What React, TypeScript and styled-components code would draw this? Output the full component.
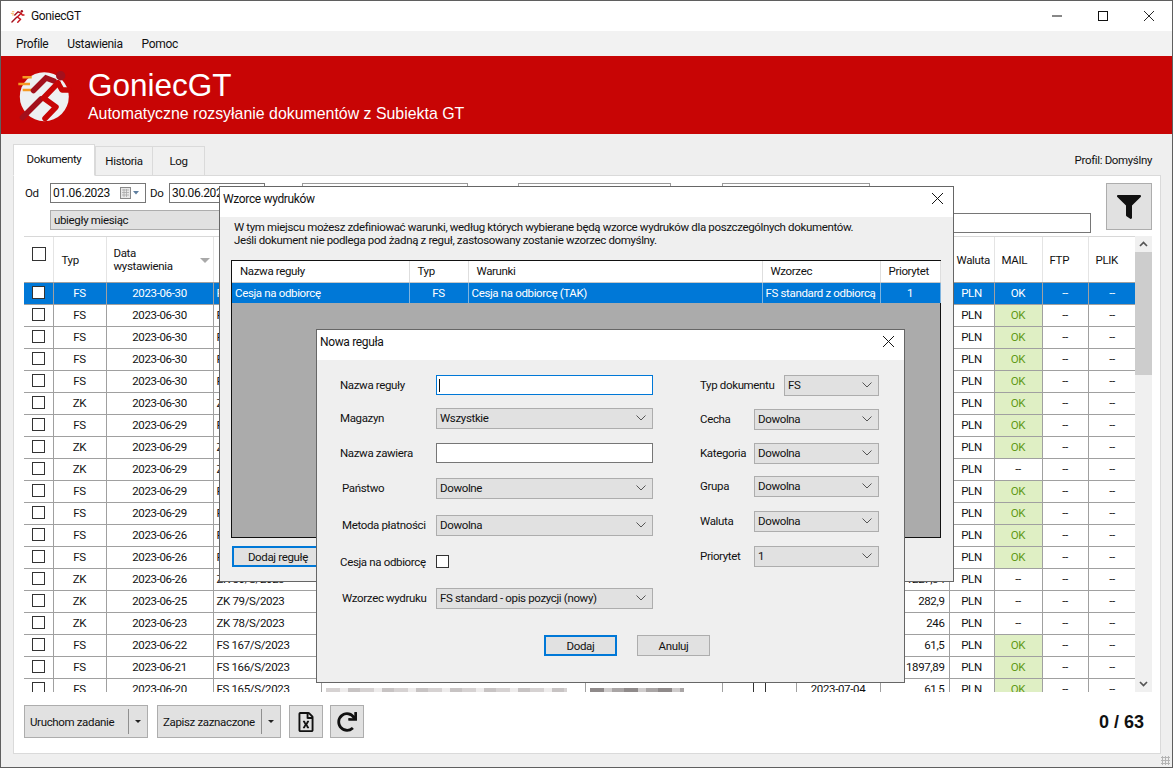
import React from 'react';
import styled, { createGlobalStyle } from 'styled-components';
import { FaFilter, FaRedo, FaRegFileExcel } from 'react-icons/fa';

/* ───────────── data ───────────── */

type Row = { typ: string; date: string; no: string; amount: string; mail: boolean };

const rows: Row[] = [
	{ typ: 'FS', date: '2023-06-30', no: 'FS 174/S/2023', amount: '', mail: true },
	{ typ: 'FS', date: '2023-06-30', no: 'FS 173/S/2023', amount: '', mail: true },
	{ typ: 'FS', date: '2023-06-30', no: 'FS 172/S/2023', amount: '', mail: true },
	{ typ: 'FS', date: '2023-06-30', no: 'FS 171/S/2023', amount: '', mail: true },
	{ typ: 'FS', date: '2023-06-30', no: 'FS 170/S/2023', amount: '', mail: true },
	{ typ: 'ZK', date: '2023-06-30', no: 'ZK 83/S/2023', amount: '', mail: true },
	{ typ: 'FS', date: '2023-06-29', no: 'FS 169/S/2023', amount: '', mail: true },
	{ typ: 'ZK', date: '2023-06-29', no: 'ZK 82/S/2023', amount: '', mail: true },
	{ typ: 'ZK', date: '2023-06-29', no: 'ZK 81/S/2023', amount: '', mail: false },
	{ typ: 'FS', date: '2023-06-29', no: 'FS 168/S/2023', amount: '', mail: true },
	{ typ: 'FS', date: '2023-06-29', no: 'FS 168/S/2023', amount: '', mail: true },
	{ typ: 'FS', date: '2023-06-26', no: 'FS 168/S/2023', amount: '', mail: true },
	{ typ: 'FS', date: '2023-06-26', no: 'FS 168/S/2023', amount: '', mail: true },
	{ typ: 'ZK', date: '2023-06-26', no: 'ZK 80/S/2023', amount: '1227,34', mail: false },
	{ typ: 'ZK', date: '2023-06-25', no: 'ZK 79/S/2023', amount: '282,9', mail: false },
	{ typ: 'ZK', date: '2023-06-23', no: 'ZK 78/S/2023', amount: '246', mail: false },
	{ typ: 'FS', date: '2023-06-22', no: 'FS 167/S/2023', amount: '61,5', mail: true },
	{ typ: 'FS', date: '2023-06-21', no: 'FS 166/S/2023', amount: '1897,89', mail: true },
	{ typ: 'FS', date: '2023-06-20', no: 'FS 165/S/2023', amount: '61,5', mail: true },
];

const colWidths = [29, 53, 107, 108, 264, 137, 74, 84, 69, 45, 48, 46, 48];

/* ───────────── window chrome ───────────── */

const Global = createGlobalStyle`
	html, body {
		margin: 0;
		padding: 0;
		height: 100%;
		overflow: hidden;
		background: #efefef;
	}
	* { box-sizing: border-box; }
	body {
		font-family: Roboto, "Liberation Sans", sans-serif;
		font-size: 11.5px;
		letter-spacing: -0.35px;
		color: #111;
	}
`;

const Win = styled.div`
	position: relative;
	width: 1173px;
	height: 768px;
	display: flex;
	flex-direction: column;
	background: #efefef;
	border: 1px solid #5f5f5f;
	overflow: hidden;
`;

const TitleBar = styled.div`
	height: 30px;
	flex: none;
	display: flex;
	align-items: center;
	padding-left: 9px;
	gap: 6px;
	background: #fff;
	font-size: 12px;
`;

const WinButtons = styled.div`
	margin-left: auto;
	display: flex;
	height: 100%;
`;

const WinButton = styled.div`
	width: 46px;
	display: flex;
	align-items: center;
	justify-content: center;
`;

const MenuBar = styled.div`
	height: 25px;
	flex: none;
	display: flex;
	align-items: center;
	gap: 19px;
	padding-left: 15px;
	background: #f2f2f2;
	font-size: 12px;
`;

const Banner = styled.div`
	height: 78px;
	flex: none;
	display: flex;
	align-items: center;
	padding-left: 17px;
	background: #c80505;
	color: #fff;
`;

const BannerText = styled.div`
	margin-left: 22px;
	padding-bottom: 2px;
	display: flex;
	flex-direction: column;
	font-family: "Liberation Sans", Arial, sans-serif;
	letter-spacing: 0;
`;

const BannerTitle = styled.div`
	font-size: 31.5px;
	line-height: 38px;
`;

const BannerSub = styled.div`
	font-size: 15.9px;
	line-height: 19px;
`;

/* ───────────── tabs ───────────── */

const Content = styled.div`
	flex: 1;
	display: flex;
	flex-direction: column;
	padding: 10px 11px 13px 12px;
	min-height: 0;
`;

const TabRow = styled.div`
	height: 32px;
	flex: none;
	display: flex;
	align-items: flex-end;
	position: relative;
	z-index: 1;
	margin-bottom: -1px;
`;

const Tab = styled.div<{ $active?: boolean; $w: number }>`
	width: ${({ $w }) => $w}px;
	height: ${({ $active }) => ($active ? 32 : 30)}px;
	display: flex;
	align-items: center;
	justify-content: center;
	padding-bottom: ${({ $active }) => ($active ? 3 : 0)}px;
	background: ${({ $active }) => ($active ? '#fff' : '#f0f0f0')};
	border: 1px solid #dadada;
	border-bottom: ${({ $active }) => ($active ? '1px solid #fff' : '1px solid #dadada')};
	margin-right: ${({ $active }) => ($active ? 0 : -1)}px;
`;

const ProfileLabel = styled.div`
	margin-left: auto;
	align-self: flex-start;
	padding: 9px 9px 0 0;
`;

const Panel = styled.div`
	flex: 1;
	display: flex;
	flex-direction: column;
	padding: 7px 8px 0 10px;
	background: #fff;
	border: 1px solid #dadada;
	min-height: 0;
`;

/* ───────────── filters ───────────── */

const FilterArea = styled.div`
	display: flex;
	height: 47px;
	flex: none;
	margin-bottom: 6px;
`;

const FilterRows = styled.div`
	flex: 1;
	display: flex;
	flex-direction: column;
`;

const FilterTop = styled.div`
	display: flex;
	align-items: center;
	height: 20px;
`;

const FilterLabel = styled.span<{ $w: number; $pl: number }>`
	width: ${({ $w }) => $w}px;
	padding-left: ${({ $pl }) => $pl}px;
`;

const DateBox = styled.div`
	width: 96px;
	height: 20px;
	padding: 0 6px 0 2px;
	display: flex;
	align-items: center;
	justify-content: space-between;
	border: 1px solid #767676;
	background: #fff;
	font-size: 12px;
`;

const GreyBox = styled.div<{ $ml: number; $w: number }>`
	width: ${({ $w }) => $w}px;
	margin-left: ${({ $ml }) => $ml}px;
	height: 20px;
	border: 1px solid #9a9a9a;
	background: #fff;
`;

const FilterBottom = styled.div`
	display: flex;
	align-items: flex-start;
	margin-top: 7px;
	padding-left: 26px;
	padding-right: 15px;
`;

const PresetCombo = styled.div`
	width: 300px;
	height: 20px;
	padding-left: 3px;
	display: flex;
	align-items: center;
	background: #e1e1e1;
	border: 1px solid #adadad;
`;

const SearchInput = styled.div`
	margin-left: auto;
	margin-top: 3px;
	width: 138px;
	height: 20px;
	background: #fff;
	border: 1px solid #767676;
`;

const FilterButton = styled.div`
	width: 46px;
	height: 47px;
	display: flex;
	align-items: center;
	justify-content: center;
	background: #e1e1e1;
	border: 1px solid #adadad;
`;

/* ───────────── table ───────────── */

const TableArea = styled.div`
	display: flex;
	height: 456px;
	flex: none;
`;

const TableClip = styled.div`
	width: 1112px;
	height: 456px;
	overflow: hidden;
	border-top: 1px solid #d8d8d8;
`;

const Grid = styled.table`
	width: 1112px;
	table-layout: fixed;
	border-collapse: collapse;
	font-size: 11.5px;
`;

const Th = styled.th<{ $pl?: number }>`
	height: 45px;
	padding: 2px 0 0 ${({ $pl }) => $pl ?? 7}px;
	text-align: left;
	font-weight: 400;
	line-height: 13px;
	border-right: 1px solid #e4e4e4;
	border-bottom: 1px solid #a0a0a0;
	background: #fff;
	white-space: nowrap;
`;

const ThInner = styled.div`
	display: flex;
	align-items: center;
	justify-content: space-between;
	padding-right: 3px;
`;

const SortArrow = styled.span`
	width: 0;
	height: 0;
	border-left: 5px solid transparent;
	border-right: 5px solid transparent;
	border-top: 5px solid #a9a9a9;
`;

const Tr = styled.tr<{ $sel?: boolean }>`
	height: 22px;
	background: ${({ $sel }) => ($sel ? '#0078d7' : '#fff')};
	color: ${({ $sel }) => ($sel ? '#fff' : '#111')};
`;

const Td = styled.td<{ $align?: string }>`
	padding: 0 4px 0 ${({ $align }) => ($align === 'left' ? 3 : 4)}px;
	border-right: 1px solid #a0a0a0;
	border-bottom: 1px solid #a0a0a0;
	text-align: ${({ $align }) => $align || 'center'};
	white-space: nowrap;
	overflow: hidden;
`;

const StatusTd = styled(Td)<{ $ok: boolean }>`
	background: ${({ $ok }) => ($ok ? '#dfefc4' : 'transparent')};
	color: ${({ $ok }) => ($ok ? '#5f9a17' : 'inherit')};
`;

const Blur = styled.div<{ $dark?: boolean }>`
	height: 8px;
	margin-top: 6px;
	margin-right: ${({ $dark }) => ($dark ? 34 : 14)}px;
	background: repeating-linear-gradient(
		90deg,
		${({ $dark }) => ($dark ? '#8f8a8a' : '#d6d2d2')} 0 14px,
		${({ $dark }) => ($dark ? '#cfcccc' : '#eeecec')} 14px 22px,
		${({ $dark }) => ($dark ? '#a9a5a5' : '#c7c3c3')} 22px 34px
	);
`;

const Check = styled.span`
	display: inline-block;
	width: 13px;
	height: 13px;
	margin-bottom: 2px;
	vertical-align: middle;
	background: #fff;
	border: 1px solid #333;
`;

const HeadCheck = styled(Check)`
	width: 14px;
	height: 14px;
	margin-bottom: 12px;
`;

const Scrollbar = styled.div`
	width: 17px;
	height: 456px;
	display: flex;
	flex-direction: column;
	background: #f0f0f0;
`;

const ScrollArrow = styled.div`
	height: 16px;
	flex: none;
	display: flex;
	align-items: center;
	justify-content: center;
`;

const ScrollThumb = styled.div`
	height: 123px;
	flex: none;
	background: #cdcdcd;
`;

const ScrollTrack = styled.div`
	flex: 1;
`;

/* ───────────── bottom bar ───────────── */

const BottomBar = styled.div`
	flex: 1;
	display: flex;
	align-items: flex-start;
	padding-top: 13px;
`;

const SplitButton = styled.div<{ $ml?: number }>`
	width: 124px;
	height: 33px;
	margin-left: ${({ $ml }) => $ml || 0}px;
	display: flex;
	align-items: center;
	background: #e1e1e1;
	border: 1px solid #adadad;
`;

const SplitLabel = styled.div`
	flex: 1;
	padding-left: 5px;
	white-space: nowrap;
`;

const SplitArrow = styled.div`
	width: 19px;
	height: 25px;
	display: flex;
	align-items: center;
	justify-content: center;
	border-left: 1px solid #8f8f8f;
	&::after {
		content: '';
		border-left: 3px solid transparent;
		border-right: 3px solid transparent;
		border-top: 3px solid #222;
	}
`;

const IconButton = styled.div<{ $ml: number }>`
	width: 34px;
	height: 33px;
	margin-left: ${({ $ml }) => $ml}px;
	display: flex;
	align-items: center;
	justify-content: center;
	background: #e1e1e1;
	border: 1px solid #adadad;
`;

const Counter = styled.div`
	margin-left: auto;
	margin-right: 8px;
	margin-top: 7px;
	font-family: "Liberation Sans", Arial, sans-serif;
	font-size: 18px;
	font-weight: 700;
	letter-spacing: 0;
`;

const Grip = styled.div`
	position: absolute;
	right: 2px;
	bottom: 2px;
	width: 9px;
	height: 9px;
	background: radial-gradient(#b5b5b5 1px, transparent 1.2px) 0 0 / 3px 3px;
`;

/* ───────────── dialogs ───────────── */

const Dialog = styled.div<{ $x: number; $y: number; $w: number; $h: number }>`
	position: absolute;
	left: ${({ $x }) => $x}px;
	top: ${({ $y }) => $y}px;
	width: ${({ $w }) => $w}px;
	height: ${({ $h }) => $h}px;
	display: flex;
	flex-direction: column;
	background: #efefef;
	border: 1px solid #666;
`;

const DialogTitle = styled.div`
	height: 30px;
	flex: none;
	padding: 0 10px 7px 3px;
	display: flex;
	align-items: center;
	justify-content: space-between;
	background: #fff;
	font-size: 12px;
`;

const DialogNote = styled.div`
	padding: 4px 0 0 14px;
	height: 43px;
	line-height: 13px;
	white-space: nowrap;
`;

const RuleList = styled.div`
	margin-left: 11px;
	width: 710px;
	height: 278px;
	background: #ababab;
	border: 1px solid #111;
`;

const RuleTable = styled.table`
	width: 708px;
	table-layout: fixed;
	border-collapse: collapse;
`;

const RuleTh = styled.th`
	height: 21px;
	padding: 0 0 0 8px;
	text-align: left;
	font-weight: 400;
	background: #fff;
	border-right: 1px solid #dedede;
	border-bottom: 1px solid #c8c8c8;
`;

const RuleTd = styled.td<{ $center?: boolean }>`
	height: 21px;
	padding: 0 3px;
	color: #fff;
	background: #0078d7;
	border-right: 1px solid #7fb4df;
	text-align: ${({ $center }) => ($center ? 'center' : 'left')};
	white-space: nowrap;
	overflow: hidden;
`;

const FormButton = styled.div<{ $focus?: boolean; $w: number }>`
	width: ${({ $w }) => $w}px;
	height: 21px;
	display: flex;
	align-items: center;
	justify-content: center;
	background: #e1e1e1;
	border: ${({ $focus }) => ($focus ? '2px solid #0078d7' : '1px solid #adadad')};
`;

const AddRuleRow = styled.div`
	padding: 8px 0 0 12px;
`;

const FormBody = styled.div`
	flex: 1;
	display: flex;
	padding: 15px 25px 0 23px;
`;

const FormCol = styled.div<{ $w: number; $ml?: number }>`
	width: ${({ $w }) => $w}px;
	margin-left: ${({ $ml }) => $ml || 0}px;
	display: flex;
	flex-direction: column;
`;

const Field = styled.div<{ $mt?: number }>`
	height: 20px;
	margin-top: ${({ $mt }) => $mt || 0}px;
	display: flex;
	align-items: center;
	justify-content: space-between;
	flex: none;
`;

const FieldLabel = styled.span<{ $ml?: number }>`
	margin-left: ${({ $ml }) => $ml || 0}px;
	white-space: nowrap;
`;

const Combo = styled.div<{ $w: number }>`
	width: ${({ $w }) => $w}px;
	height: 21px;
	padding: 0 6px 0 3px;
	display: flex;
	align-items: center;
	justify-content: space-between;
	background: #e1e1e1;
	border: 1px solid #adadad;
`;

const TextBox = styled.div<{ $focus?: boolean }>`
	width: 217px;
	height: 20px;
	padding-left: 2px;
	display: flex;
	align-items: center;
	background: #fff;
	border: 1px solid ${({ $focus }) => ($focus ? '#0078d7' : '#767676')};
`;

const Caret = styled.span`
	width: 1px;
	height: 13px;
	background: #111;
`;

const CheckSlot = styled.div`
	width: 217px;
`;

const FormActions = styled.div`
	height: 47px;
	flex: none;
	display: flex;
	justify-content: flex-start;
	gap: 20px;
	padding-left: 227px;
`;

/* ───────────── drawings ───────────── */

const LogoSvg = styled.svg`
	margin: 0 -14px 0 -8px;
`;

const Runner = ({ color = '#c80505', dark = '#a3101c' }: { color?: string; dark?: string }) => (
	<>
		<g stroke="#f59a23" strokeWidth="2.6">
			<path d="M12.5 17.3H21.7M8.3 24H20M12.7 30H21.7" />
		</g>
		<circle cx="50.7" cy="15.7" r="4.7" fill={dark} />
		<g fill="none" stroke={dark} strokeWidth="5.5" strokeLinecap="round">
			<path d="M12.5 57.5 31 39" />
			<path d="M23.5 30.5 36 18l8 3" />
		</g>
		<g fill="none" stroke={color} strokeWidth="5.5" strokeLinejoin="round" strokeLinecap="round">
			<path d="M48 23 33.5 38 46 47 35 58.5" />
			<path d="M48 23l4 7h7" />
		</g>
	</>
);

const Logo = () => (
	<LogoSvg width="70" height="70" viewBox="0 0 70 70">
		<circle cx="34.3" cy="36.7" r="24.5" fill="#eef0f2" />
		<Runner />
	</LogoSvg>
);

const SmallLogo = () => (
	<svg width="15" height="15" viewBox="5 8 58 56">
		<Runner color="#c8141c" dark="#a3101c" />
	</svg>
);

const CalendarIcon = () => (
	<svg width="19" height="12" viewBox="0 0 19 12">
		<rect x="0.5" y="0.5" width="10" height="11" fill="#e8e8e8" stroke="#8a8a8a" />
		<path d="M2 3h7M2 5.5h7M2 8h7M4 2v8M6.5 2v8" stroke="#a8a8a8" strokeWidth="0.8" />
		<path d="M13 4h6l-3 3.5z" fill="#5f7f9f" />
	</svg>
);

const Chevron = () => (
	<svg width="10" height="6" viewBox="0 0 10 6">
		<path d="M.5.5 5 5 9.5.5" fill="none" stroke="#555" strokeWidth="1" />
	</svg>
);

const CloseX = ({ size = 10 }: { size?: number }) => (
	<svg width={size} height={size} viewBox="0 0 10 10">
		<path d="M0 0 10 10M10 0 0 10" stroke="#111" strokeWidth="0.9" />
	</svg>
);

const ScrollChevron = ({ up }: { up?: boolean }) => (
	<svg width="9" height="6" viewBox="0 0 9 6">
		<path d={up ? 'M1 5 4.5 1.5 8 5' : 'M1 1 4.5 4.5 8 1'} fill="none" stroke="#555" strokeWidth="1.7" />
	</svg>
);

/* ───────────── component ───────────── */

export default function App() {
	return (
		<Win>
			<Global />
			<TitleBar>
				<SmallLogo />
				GoniecGT
				<WinButtons>
					<WinButton>
						<svg width="10" height="10" viewBox="0 0 10 10"><path d="M0 5h10" stroke="#111" /></svg>
					</WinButton>
					<WinButton>
						<svg width="10" height="10" viewBox="0 0 10 10"><rect x=".5" y=".5" width="9" height="9" fill="none" stroke="#111" /></svg>
					</WinButton>
					<WinButton><CloseX /></WinButton>
				</WinButtons>
			</TitleBar>
			<MenuBar>
				<span>Profile</span>
				<span>Ustawienia</span>
				<span>Pomoc</span>
			</MenuBar>
			<Banner>
				<Logo />
				<BannerText>
					<BannerTitle>GoniecGT</BannerTitle>
					<BannerSub>Automatyczne rozsyłanie dokumentów z Subiekta GT</BannerSub>
				</BannerText>
			</Banner>

			<Content>
				<TabRow>
					<Tab $active $w={82}>Dokumenty</Tab>
					<Tab $w={58}>Historia</Tab>
					<Tab $w={53}>Log</Tab>
					<ProfileLabel>Profil: Domyślny</ProfileLabel>
				</TabRow>
				<Panel>
					<FilterArea>
						<FilterRows>
							<FilterTop>
								<FilterLabel $w={26} $pl={1}>Od</FilterLabel>
								<DateBox>01.06.2023<CalendarIcon /></DateBox>
								<FilterLabel $w={23} $pl={4}>Do</FilterLabel>
								<DateBox>30.06.2023<CalendarIcon /></DateBox>
								<GreyBox $ml={37} $w={166} />
								<GreyBox $ml={50} $w={153} />
								<GreyBox $ml={51} $w={148} />
							</FilterTop>
							<FilterBottom>
								<PresetCombo>ubiegły miesiąc</PresetCombo>
								<SearchInput />
							</FilterBottom>
						</FilterRows>
						<FilterButton><FaFilter size={24} color="#111" /></FilterButton>
					</FilterArea>

					<TableArea>
						<TableClip>
							<Grid>
								<colgroup>
									{colWidths.map((w, i) => <col key={i} width={w} />)}
								</colgroup>
								<thead>
									<tr>
										<Th $pl={8}><HeadCheck /></Th>
										<Th $pl={8}>Typ</Th>
										<Th>
											<ThInner>
												<span>Data<br />wystawienia</span>
												<SortArrow />
											</ThInner>
										</Th>
										<Th />
										<Th />
										<Th />
										<Th />
										<Th />
										<Th />
										<Th>Waluta</Th>
										<Th>MAIL</Th>
										<Th>FTP</Th>
										<Th>PLIK</Th>
									</tr>
								</thead>
								<tbody>
									{rows.map((r, i) => (
										<Tr key={i} $sel={i === 0}>
											<Td><Check /></Td>
											<Td>{r.typ}</Td>
											<Td>{r.date}</Td>
											<Td $align="left">{r.no}</Td>
											<Td><Blur /></Td>
											<Td><Blur $dark /></Td>
											<Td><Check /></Td>
											<Td>2023-07-04</Td>
											<Td $align="right">{r.amount}</Td>
											<Td>PLN</Td>
											<StatusTd $ok={r.mail && i > 0}>{r.mail ? 'OK' : '--'}</StatusTd>
											<Td>--</Td>
											<Td>--</Td>
										</Tr>
									))}
								</tbody>
							</Grid>
						</TableClip>
						<Scrollbar>
							<ScrollArrow><ScrollChevron up /></ScrollArrow>
							<ScrollThumb />
							<ScrollTrack />
							<ScrollArrow><ScrollChevron /></ScrollArrow>
						</Scrollbar>
					</TableArea>

					<BottomBar>
						<SplitButton>
							<SplitLabel>Uruchom zadanie</SplitLabel>
							<SplitArrow />
						</SplitButton>
						<SplitButton $ml={9}>
							<SplitLabel>Zapisz zaznaczone</SplitLabel>
							<SplitArrow />
						</SplitButton>
						<IconButton $ml={8}><FaRegFileExcel size={20} color="#111" /></IconButton>
						<IconButton $ml={7}><FaRedo size={20} color="#111" /></IconButton>
						<Counter>0 / 63</Counter>
					</BottomBar>
				</Panel>
			</Content>
			<Grip />

			<Dialog $x={218} $y={185} $w={735} $h={396}>
				<DialogTitle>Wzorce wydruków<CloseX size={11} /></DialogTitle>
				<DialogNote>
					W tym miejscu możesz zdefiniować warunki, według których wybierane będą wzorce wydruków dla poszczególnych dokumentów.<br />
					Jeśli dokument nie podlega pod żadną z reguł, zastosowany zostanie wzorzec domyślny.
				</DialogNote>
				<RuleList>
					<RuleTable>
						<colgroup>
							<col width={177} />
							<col width={59} />
							<col width={294} />
							<col width={118} />
							<col width={60} />
						</colgroup>
						<thead>
							<tr>
								<RuleTh>Nazwa reguły</RuleTh>
								<RuleTh>Typ</RuleTh>
								<RuleTh>Warunki</RuleTh>
								<RuleTh>Wzorzec</RuleTh>
								<RuleTh>Priorytet</RuleTh>
							</tr>
						</thead>
						<tbody>
							<tr>
								<RuleTd>Cesja na odbiorcę</RuleTd>
								<RuleTd $center>FS</RuleTd>
								<RuleTd>Cesja na odbiorcę (TAK)</RuleTd>
								<RuleTd>FS standard z odbiorcą</RuleTd>
								<RuleTd $center>1</RuleTd>
							</tr>
						</tbody>
					</RuleTable>
				</RuleList>
				<AddRuleRow><FormButton $focus $w={92}>Dodaj regułę</FormButton></AddRuleRow>
			</Dialog>

			<Dialog $x={315} $y={328} $w={589} $h={354}>
				<DialogTitle>Nowa reguła<CloseX size={11} /></DialogTitle>
				<FormBody>
					<FormCol $w={313}>
						<Field>
							<FieldLabel>Nazwa reguły</FieldLabel>
							<TextBox $focus><Caret /></TextBox>
						</Field>
						<Field $mt={13}>
							<FieldLabel>Magazyn</FieldLabel>
							<Combo $w={217}>Wszystkie<Chevron /></Combo>
						</Field>
						<Field $mt={15}>
							<FieldLabel>Nazwa zawiera</FieldLabel>
							<TextBox />
						</Field>
						<Field $mt={15}>
							<FieldLabel $ml={2}>Państwo</FieldLabel>
							<Combo $w={217}>Dowolne<Chevron /></Combo>
						</Field>
						<Field $mt={17}>
							<FieldLabel $ml={2}>Metoda płatności</FieldLabel>
							<Combo $w={217}>Dowolna<Chevron /></Combo>
						</Field>
						<Field $mt={17}>
							<FieldLabel>Cesja na odbiorcę</FieldLabel>
							<CheckSlot><Check /></CheckSlot>
						</Field>
						<Field $mt={16}>
							<FieldLabel $ml={2}>Wzorzec wydruku</FieldLabel>
							<Combo $w={217}>FS standard - opis pozycji (nowy)<Chevron /></Combo>
						</Field>
					</FormCol>
					<FormCol $w={179} $ml={47}>
						<Field>
							<FieldLabel>Typ dokumentu</FieldLabel>
							<Combo $w={95}>FS<Chevron /></Combo>
						</Field>
						<Field $mt={14}>
							<FieldLabel>Cecha</FieldLabel>
							<Combo $w={125}>Dowolna<Chevron /></Combo>
						</Field>
						<Field $mt={14}>
							<FieldLabel>Kategoria</FieldLabel>
							<Combo $w={125}>Dowolna<Chevron /></Combo>
						</Field>
						<Field $mt={13}>
							<FieldLabel>Grupa</FieldLabel>
							<Combo $w={125}>Dowolna<Chevron /></Combo>
						</Field>
						<Field $mt={15}>
							<FieldLabel>Waluta</FieldLabel>
							<Combo $w={125}>Dowolna<Chevron /></Combo>
						</Field>
						<Field $mt={15}>
							<FieldLabel>Priorytet</FieldLabel>
							<Combo $w={125}>1<Chevron /></Combo>
						</Field>
					</FormCol>
				</FormBody>
				<FormActions>
					<FormButton $focus $w={73}>Dodaj</FormButton>
					<FormButton $w={73}>Anuluj</FormButton>
				</FormActions>
			</Dialog>
		</Win>
	);
}
